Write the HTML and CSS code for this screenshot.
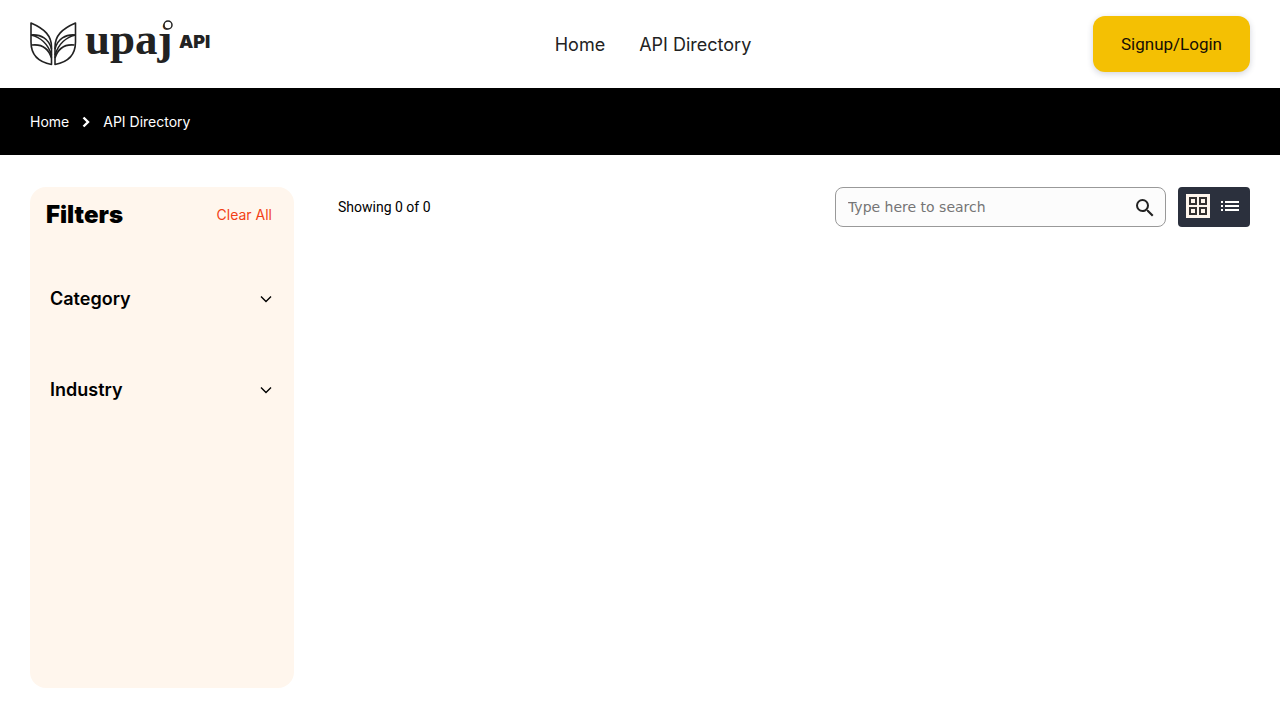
FILE: index.html
```html
<!DOCTYPE html>
<html lang="en">
<head>
<meta charset="utf-8">
<meta name="viewport" content="width=device-width, initial-scale=1">
<title>API Directory</title>
<link rel="stylesheet" href="styles.css">
</head>
<body>
<header class="header">
  <a class="logo" href="#" aria-label="upaj API">
    <svg width="184" height="56" viewBox="0 0 184 56">
      <g class="leaves">
        <g id="leaf">
          <path d="M1 7C15 13 21.5 20 21.5 31V48.500C8 46 1 38 1 26Z"/>
          <path d="M1 19C10 21 18 28 21.500 39"/>
          <path d="M2 29C11 28 18 31 21.500 42"/>
          <path d="M1 19C11 18 19 23 21.500 33"/>
        </g>
        <use href="#leaf" transform="matrix(-1 0 0 1 46.500 0)"/>
      </g>
      <text class="logo-name" x="55" y="38">upaj</text>
      <circle class="logo-ring" cx="138" cy="9" r="4"/>
      <text class="logo-suffix" x="149" y="32">API</text>
    </svg>
  </a>
  <nav class="nav">
    <a href="#">Home</a>
    <a href="#">API Directory</a>
  </nav>
  <button class="login" type="button">Signup/Login</button>
</header>
<nav class="breadcrumb" aria-label="Breadcrumb">
  <a href="#">Home</a>
  <svg width="8" height="12" viewBox="0 0 8 12"><path d="M1.500 1.500L6 6L1.500 10.500"/></svg>
  <a href="#">API Directory</a>
</nav>
<main class="main">
  <aside class="filters">
    <div class="filters-head">
      <h2>Filters</h2>
      <button class="clear" type="button">Clear All</button>
    </div>
    <button class="group" type="button">Category
      <svg width="12" height="8" viewBox="0 0 12 8"><path d="M1 1.500L6 6.500L11 1.500"/></svg>
    </button>
    <button class="group" type="button">Industry
      <svg width="12" height="8" viewBox="0 0 12 8"><path d="M1 1.500L6 6.500L11 1.500"/></svg>
    </button>
  </aside>
  <section class="results">
    <p class="count">Showing 0 of 0</p>
    <form class="search">
      <input type="text" placeholder="Type here to search" aria-label="Search">
      <button type="button" aria-label="Submit search">
        <svg width="24" height="24" viewBox="0 0 24 24"><path d="M15.500 15h-.79l-.28-.27A6.470 6.470 0 0 0 16 10.500 6.500 6.500 0 1 0 9.500 17c1.610 0 3.090-.59 4.230-1.570l.27.280v.79l5 4.990L20.490 20l-4.990-5zm-6 0C7.010 15 5 12.990 5 10.500S7.010 6 9.500 6 14 8.010 14 10.500 11.990 15 9.500 15z"/></svg>
      </button>
    </form>
    <div class="views">
      <button class="grid-view" type="button" aria-label="Grid view">
        <svg width="24" height="24" viewBox="0 0 24 24"><path d="M4 4h6v6H4zM14 4h6v6h-6zM4 14h6v6H4zM14 14h6v6h-6z"/></svg>
      </button>
      <button class="list-view" type="button" aria-label="List view">
        <svg width="24" height="24" viewBox="0 0 24 24"><path d="M3 7h2v2H3zM3 11h2v2H3zM3 15h2v2H3zM7 7h14v2H7zM7 11h14v2H7zM7 15h14v2H7z"/></svg>
      </button>
    </div>
  </section>
</main>
</body>
</html>
```

FILE: styles.css
```css
* { box-sizing: border-box; }
body {
  margin: 0;
  background: #fff;
  color: #000;
  font-family: Inter, sans-serif;
}
a { color: inherit; text-decoration: none; }
button {
  padding: 0;
  border: 0;
  background: none;
  color: inherit;
  font: inherit;
  cursor: pointer;
}
svg { display: block; overflow: visible; }
.header {
  display: grid;
  grid-template-columns: 1fr auto 1fr;
  align-items: center;
  padding: 16px 30px;
}
.leaves { fill: none; stroke: #222; stroke-width: 1.6; stroke-linejoin: round; }
.logo-name { font: 700 45px "Liberation Serif", serif; fill: #222; }
.logo-ring { fill: #fff; stroke: #222; stroke-width: 1.5; }
.logo-suffix { font: 900 18px Inter, sans-serif; fill: #222; }
.nav {
  display: flex;
  gap: 34px;
  padding-left: 26px;
  color: #222;
  font-size: 18px;
}
.login {
  justify-self: end;
  height: 56px;
  padding: 0 28px;
  border-radius: 12px;
  background: #f4c003;
  box-shadow: 0 2px 6px rgba(30, 40, 80, .2);
  color: #150d05;
  font: 17px Roboto, sans-serif;
}
.breadcrumb {
  display: flex;
  align-items: center;
  gap: 13px;
  height: 67px;
  padding: 0 30px;
  background: #000;
  color: #fff;
  font-size: 14px;
}
.breadcrumb svg { fill: none; stroke: #fff; stroke-width: 2.4; }
.main {
  display: flex;
  align-items: flex-start;
  gap: 44px;
  padding: 32px 30px;
}
.filters {
  flex: 0 0 264px;
  min-height: 501px;
  padding: 12px 22px 0 16px;
  border-radius: 16px;
  background: #fff6ed;
}
.filters-head {
  display: flex;
  align-items: center;
  justify-content: space-between;
  height: 30px;
  margin-bottom: 24px;
}
.filters h2 { margin: 0; font-size: 24px; font-weight: 900; }
.clear { color: #f23f16; font-size: 14px; }
.group {
  display: flex;
  align-items: center;
  justify-content: space-between;
  width: 100%;
  height: 91px;
  padding-left: 4px;
  font-size: 18px;
  font-weight: 600;
}
.group svg { fill: none; stroke: #000; stroke-width: 1.4; }
.results {
  display: flex;
  flex: 1;
  align-items: center;
  gap: 12px;
}
.count { flex: 1; margin: 0; font: 14px Roboto, sans-serif; }
.search {
  display: flex;
  align-items: center;
  width: 331px;
  height: 40px;
  padding: 0 8px 0 12px;
  border: 1px solid #999;
  border-radius: 8px;
  background: #fcfcfc;
}
.search input {
  flex: 1;
  min-width: 0;
  padding: 0;
  border: 0;
  outline: 0;
  background: none;
  font: 14px "DejaVu Sans", sans-serif;
}
.search input::placeholder { color: #757575; }
.search svg { fill: #222; }
.views {
  display: flex;
  gap: 8px;
  height: 40px;
  padding: 7px 8px;
  border-radius: 4px;
  background: #2b303d;
}
.grid-view { height: 24px; background: #fff6ed; }
.grid-view svg { fill: none; stroke: #33302f; stroke-width: 2; }
.list-view { height: 24px; }
.list-view svg { fill: #fff; }
```
